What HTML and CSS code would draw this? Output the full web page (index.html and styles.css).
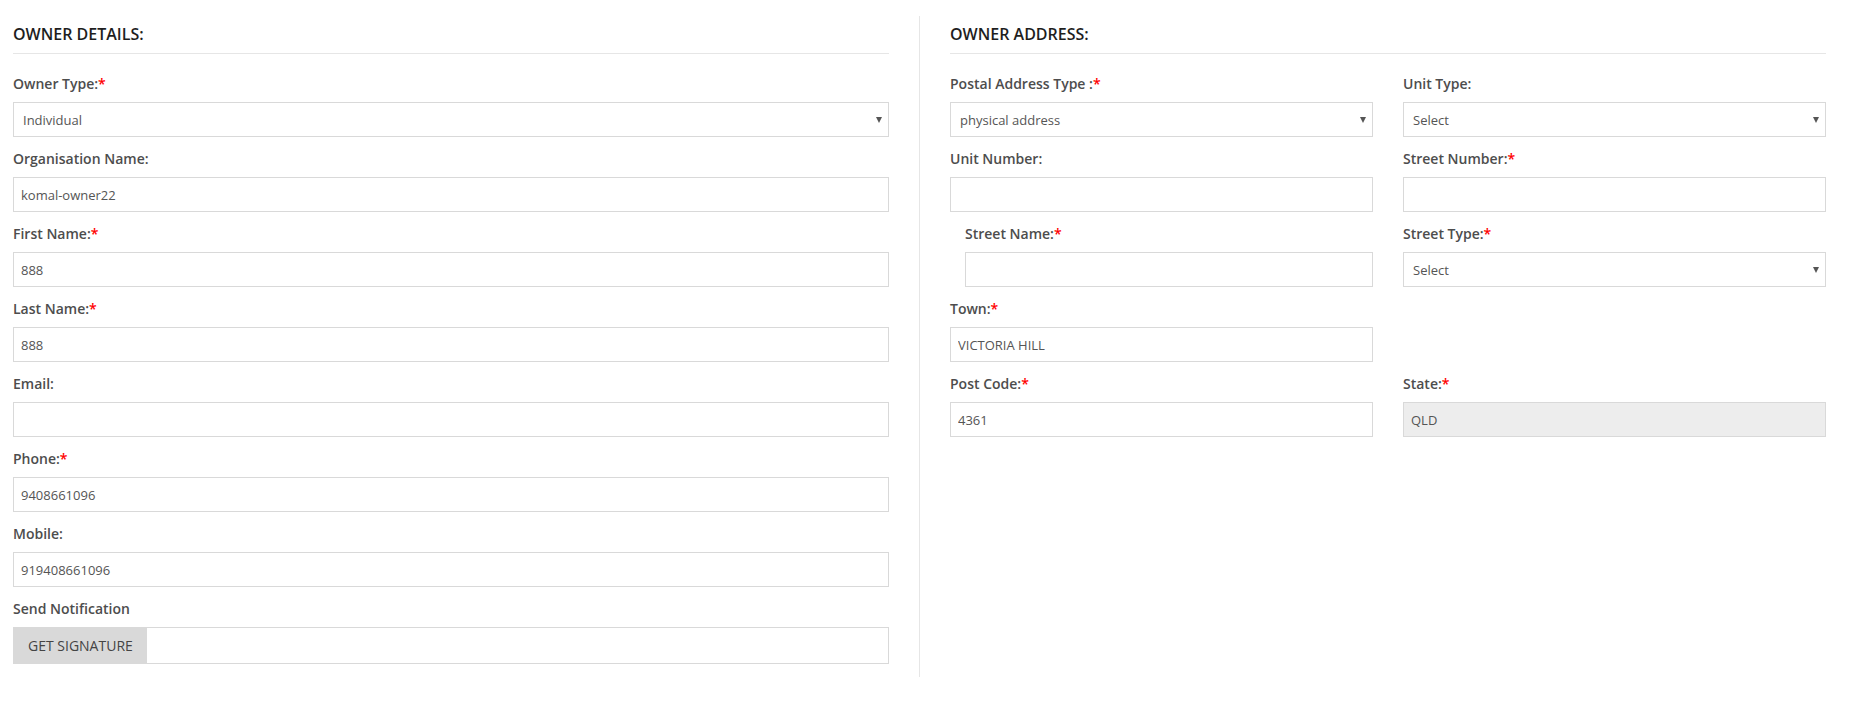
FILE: index.html
```html
<!DOCTYPE html>
<html>
<head>
<meta charset="utf-8">
<title>Owner</title>
<link rel="stylesheet" href="styles.css">
</head>
<body>
<div class="page">
  <section class="col col-left">
    <h3 class="section-title">OWNER DETAILS:</h3>
    <div class="field">
      <label class="label">Owner Type:<span class="req">*</span></label>
      <div class="select-wrap"><select class="control"><option>Individual</option></select></div>
    </div>
    <div class="field">
      <label class="label">Organisation Name:</label>
      <input class="control" type="text" value="komal-owner22">
    </div>
    <div class="field">
      <label class="label">First Name:<span class="req">*</span></label>
      <input class="control" type="text" value="888">
    </div>
    <div class="field">
      <label class="label">Last Name:<span class="req">*</span></label>
      <input class="control" type="text" value="888">
    </div>
    <div class="field">
      <label class="label">Email:</label>
      <input class="control" type="text" value="">
    </div>
    <div class="field">
      <label class="label">Phone:<span class="req">*</span></label>
      <input class="control" type="text" value="9408661096">
    </div>
    <div class="field">
      <label class="label">Mobile:</label>
      <input class="control" type="text" value="919408661096">
    </div>
    <div class="field last">
      <label class="label">Send Notification</label>
      <div class="sig">
        <button class="sig-btn" type="button">GET SIGNATURE</button>
        <input class="sig-input" type="text" value="">
      </div>
    </div>
  </section>
  <section class="col col-right">
    <h3 class="section-title">OWNER ADDRESS:</h3>
    <div class="grid">
      <div class="field">
        <label class="label">Postal Address Type :<span class="req">*</span></label>
        <div class="select-wrap"><select class="control"><option>physical address</option></select></div>
      </div>
      <div class="field">
        <label class="label">Unit Type:</label>
        <div class="select-wrap"><select class="control"><option>Select</option></select></div>
      </div>
      <div class="field">
        <label class="label">Unit Number:</label>
        <input class="control" type="text" value="">
      </div>
      <div class="field">
        <label class="label">Street Number:<span class="req">*</span></label>
        <input class="control" type="text" value="">
      </div>
      <div class="field indent">
        <label class="label">Street Name:<span class="req">*</span></label>
        <input class="control" type="text" value="">
      </div>
      <div class="field">
        <label class="label">Street Type:<span class="req">*</span></label>
        <div class="select-wrap"><select class="control"><option>Select</option></select></div>
      </div>
      <div class="field">
        <label class="label">Town:<span class="req">*</span></label>
        <input class="control" type="text" value="VICTORIA HILL">
      </div>
      <div class="field empty"></div>
      <div class="field">
        <label class="label">Post Code:<span class="req">*</span></label>
        <input class="control" type="text" value="4361">
      </div>
      <div class="field">
        <label class="label">State:<span class="req">*</span></label>
        <input class="control disabled" type="text" value="QLD" disabled>
      </div>
    </div>
  </section>
</div>
</body>
</html>
```

FILE: styles.css
```css
* {
  box-sizing: border-box;
}

html, body {
  margin: 0;
  padding: 0;
  background: #ffffff;
}

body {
  font-family: "Open Sans", "Liberation Sans", Arial, sans-serif;
  color: #444;
}

.page {
  display: flex;
  align-items: flex-start;
  padding: 16px 32px 0 13px;
}

.col {
  padding-top: 7px;
}

.col-left {
  flex: 0 0 907px;
  padding-right: 30px;
  padding-bottom: 13px;
  border-right: 1px solid #e6e6e6;
}

.col-right {
  flex: 1 1 auto;
  padding-left: 30px;
}

.section-title {
  margin: 0 0 20px 0;
  font-size: 16px;
  line-height: 22px;
  font-weight: 600;
  color: #1e1e1e;
  padding-bottom: 8px;
  border-bottom: 1px solid #e6e6e6;
}

.grid {
  display: grid;
  grid-template-columns: 1fr 1fr;
  column-gap: 30px;
}

.field {
  display: flex;
  flex-direction: column;
  margin-bottom: 12px;
}

.field.last {
  margin-bottom: 0;
}

.field.indent {
  padding-left: 15px;
}

.label {
  display: block;
  font-size: 14px;
  line-height: 20px;
  font-weight: 600;
  color: #4d4d4d;
  margin-bottom: 8px;
}

.req {
  color: #ff0000;
}

.control {
  display: block;
  width: 100%;
  height: 35px;
  margin: 0;
  padding: 0 7px;
  border: 1px solid #d9d9d9;
  border-radius: 0;
  background: #fff;
  font-family: "Open Sans", "Liberation Sans", Arial, sans-serif;
  font-size: 13px;
  color: #555;
  outline: none;
}

.control.disabled {
  background: #ededed;
  color: #555;
  -webkit-text-fill-color: #555;
  opacity: 1;
}

.select-wrap {
  position: relative;
}

.select-wrap .control {
  -webkit-appearance: none;
  appearance: none;
  padding-left: 9px;
}

.select-wrap::after {
  content: "";
  position: absolute;
  right: 7px;
  top: 15px;
  width: 0;
  height: 0;
  border-left: 3px solid transparent;
  border-right: 3px solid transparent;
  border-top: 6px solid #555;
  pointer-events: none;
}

.sig {
  display: flex;
  height: 37px;
}

.sig-btn {
  flex: 0 0 134px;
  margin: 0;
  padding: 0 0 0 15px;
  border: none;
  border-radius: 0;
  background: #d9d9d9;
  text-align: left;
  font-family: "Open Sans", "Liberation Sans", Arial, sans-serif;
  font-size: 14px;
  color: #444;
}

.sig-input {
  flex: 1 1 auto;
  margin: 0;
  border: 1px solid #d9d9d9;
  border-left: none;
  outline: none;
  background: #fff;
}
```
